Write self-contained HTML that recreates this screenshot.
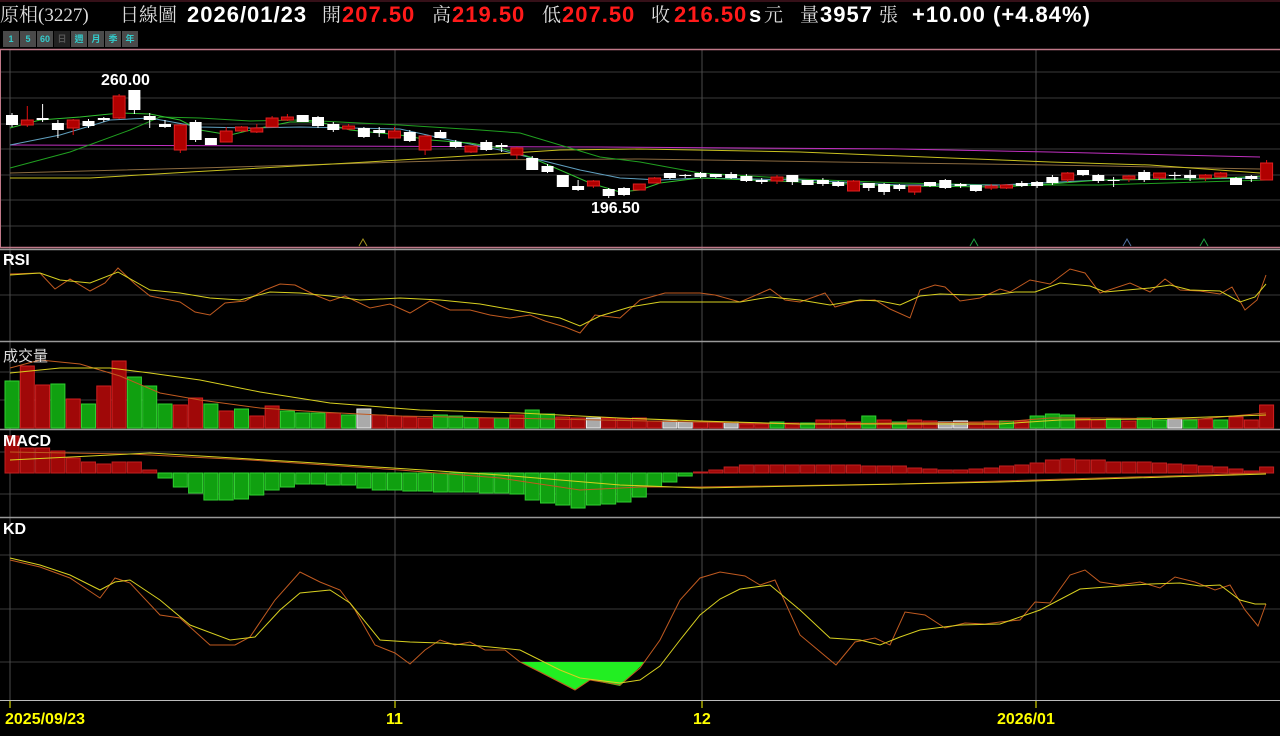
<!DOCTYPE html>
<html><head><meta charset="utf-8">
<style>
html,body{margin:0;padding:0;background:#000;width:1280px;height:736px;overflow:hidden;}
body{position:relative;font-family:"Liberation Sans","Noto Sans CJK TC",sans-serif;}
.t{position:absolute;top:4px;font-size:19px;line-height:24px;white-space:nowrap;}
.c{color:#ddd;font-family:"Liberation Serif","Noto Serif CJK SC",serif;font-size:19px;}
.b{font-weight:bold;font-size:22px;letter-spacing:1px;top:3px;}
.w{color:#fff}.r{color:#ff1a1a}
.btns{position:absolute;left:3px;top:31px;height:16px;display:flex;gap:1px;}
.btns span{width:16px;height:16px;background:#4a4a4a;color:#3cc;font-size:9px;line-height:16px;text-align:center;font-weight:bold;}
.lbl{position:absolute;left:3px;color:#fff;font-weight:bold;font-size:16px;}
svg{position:absolute;left:0;top:0;}
</style></head><body>
<svg id="s" width="1280" height="736" xmlns="http://www.w3.org/2000/svg"></svg>
<div class="t c" style="left:0">原相(3227)</div>
<div class="t c" style="left:120px">日線圖</div>
<div class="t b w" style="left:187px">2026/01/23</div>
<div class="t c" style="left:322px">開</div>
<div class="t b r" style="left:342px">207.50</div>
<div class="t c" style="left:432px">高</div>
<div class="t b r" style="left:452px">219.50</div>
<div class="t c" style="left:542px">低</div>
<div class="t b r" style="left:562px">207.50</div>
<div class="t c" style="left:651px">收</div>
<div class="t b r" style="left:674px">216.50</div>
<div class="t b w" style="left:749px">s</div>
<div class="t c" style="left:764px">元</div>
<div class="t c" style="left:800px">量</div>
<div class="t b w" style="left:820px">3957</div>
<div class="t c" style="left:879px">張</div>
<div class="t b w" style="left:912px">+10.00 (+4.84%)</div>
<div class="btns"><span>1</span><span>5</span><span>60</span><span style="background:#222;color:#555">日</span><span>週</span><span>月</span><span>季</span><span>年</span></div>
<div class="lbl" style="top:252px">RSI</div>
<div class="lbl" style="top:345px;font-weight:normal;color:#ddd;font-family:'Noto Sans CJK TC',sans-serif;font-size:15px">成交量</div>
<div class="lbl" style="top:433px">MACD</div>
<div class="lbl" style="top:521px">KD</div>
<div class="lbl" style="top:72px;left:101px;font-size:16px">260.00</div>
<div class="lbl" style="top:200px;left:591px;font-size:16px">196.50</div>
<div class="lbl" style="top:711px;left:5px;color:#ff0;font-size:16px">2025/09/23</div>
<div class="lbl" style="top:711px;left:386px;color:#ff0;font-size:16px">11</div>
<div class="lbl" style="top:711px;left:693px;color:#ff0;font-size:16px">12</div>
<div class="lbl" style="top:711px;left:997px;color:#ff0;font-size:16px">2026/01</div>
<script>
var s=document.getElementById('s'),h='';
function L(x1,y1,x2,y2,c,w){h+='<line x1="'+x1+'" y1="'+y1+'" x2="'+x2+'" y2="'+y2+'" stroke="'+c+'" stroke-width="'+(w||1)+'"/>';}
function R(x,y,w,hh,f,st){h+='<rect x="'+x+'" y="'+y+'" width="'+w+'" height="'+Math.max(hh,1)+'" fill="'+f+'"'+(st?' stroke="'+st+'" stroke-width="1"':'')+'/>';}
function P(pts,c){h+='<polyline fill="none" stroke="'+c+'" stroke-width="1" points="'+pts.map(function(p){return p.join(',')}).join(' ')+'"/>';}
h+='<line x1="0" y1="1" x2="1280" y2="1" stroke="#6a2030"/>';
[72,98,124,149,175,200,226].forEach(function(y){L(0,y,1280,y,'#3a3a3a');});
[295].forEach(function(y){L(0,y,1280,y,'#3a3a3a');});
[372,400].forEach(function(y){L(0,y,1280,y,'#3a3a3a');});
[452,494].forEach(function(y){L(0,y,1280,y,'#3a3a3a');});
[555,609,662].forEach(function(y){L(0,y,1280,y,'#3a3a3a');});
[10,395,702,1036].forEach(function(x){L(x,50,x,700,'#4a4a4a');L(x,700,x,708,'#ff0');});
L(0,49.5,1280,49.5,'#c07888',1.5);L(0,247.5,1280,247.5,'#c07888',1.5);L(0.5,49,0.5,248,'#c07888');
[249.5,341.5,429.5,517.5].forEach(function(y){L(0,y,1280,y,'#999',1.5);});
L(0,700.5,1280,700.5,'#bbb');
P([[10,145],[600,147],[900,149],[1050,152],[1260,157]],'#c030c0');
P([[10,173],[200,168],[470,160],[640,159],[900,163],[1050,165],[1260,169]],'#8a6a40');
P([[10,178],[90,178],[190,172],[350,163],[450,157],[560,150],[640,149],[800,152],[950,158],[1050,162],[1150,165],[1260,173]],'#c8c020');
P([[10,168],[70,152],[130,130],[160,117],[200,118],[250,121],[300,120],[400,125],[480,130],[520,133],[560,145],[600,157],[640,162],[700,173],[800,179],[900,183],[1000,185],[1100,185],[1200,182],[1266,180]],'#20a020');
P([[10,145],[60,135],[110,120],[150,118],[200,127],[250,128],[300,127],[350,128],[400,129],[450,140],[500,150],[540,160],[580,170],[620,178],[660,180],[700,178],[800,180],[900,185],[1000,185],[1100,180],[1266,178]],'#60a0c0');
P([[10,128],[40,120],[80,117],[120,113],[150,114],[180,120],[200,130],[230,135],[260,128],[290,122],[320,122],[350,130],[400,135],[430,140],[470,143],[500,148],[530,157],[560,170],[590,183],[620,192],[640,190],[660,183],[700,178],[800,182],[900,186],[1000,187],[1050,184],[1100,180],[1200,179],[1266,176]],'#30c030');
var C=[[115,125,113,127,'w'],[120,125,106,127,'r'],[118,120,104,122,'w'],[123,130,120,138,'w'],[120,128,119,135,'r'],[121,126,119,128,'w'],[118,120,117,122,'w'],[96,118,94,119,'r'],[90,110,90,114,'w'],[116,120,113,128,'w'],[124,127,120,128,'w'],[125,150,124,153,'r'],[122,140,120,142,'w'],[138,145,138,145,'w'],[131,142,127,142,'r'],[127,131,126,132,'r'],[128,132,124,133,'r'],[118,127,116,127,'r'],[117,120,114,121,'r'],[115,122,115,122,'w'],[117,126,116,128,'w'],[124,130,122,132,'w'],[126,129,124,130,'r'],[128,137,127,138,'w'],[130,133,127,137,'w'],[131,138,127,138,'r'],[132,141,130,142,'w'],[136,150,135,155,'r'],[132,138,130,138,'w'],[142,147,140,148,'w'],[146,152,146,153,'r'],[142,150,140,151,'w'],[145,147,143,152,'w'],[148,155,147,159,'r'],[158,170,156,170,'w'],[166,172,164,173,'w'],[175,187,175,187,'w'],[186,190,180,191,'w'],[181,186,180,188,'r'],[189,196,188,198,'w'],[188,195,187,196,'w'],[184,190,184,190,'r'],[178,183,177,183,'r'],[173,178,173,179,'w'],[175,176,174,178,'w'],[173,177,172,178,'w'],[174,177,174,178,'w'],[174,178,172,179,'w'],[176,181,174,182,'w'],[180,182,178,184,'w'],[177,181,175,184,'r'],[175,182,175,185,'w'],[180,185,180,185,'w'],[180,184,178,186,'w'],[182,186,181,187,'w'],[181,191,180,191,'r'],[183,188,183,191,'w'],[184,192,183,195,'w'],[185,189,184,191,'w'],[186,192,186,195,'r'],[182,186,182,187,'w'],[180,188,179,189,'w'],[184,186,183,188,'w'],[185,191,185,192,'w'],[186,188,184,190,'r'],[185,188,184,189,'r'],[183,186,181,187,'w'],[182,186,181,188,'w'],[177,183,175,185,'w'],[173,180,172,182,'r'],[170,175,170,176,'w'],[175,181,174,183,'w'],[180,181,177,187,'w'],[176,179,175,182,'r'],[172,180,170,182,'w'],[173,178,173,180,'r'],[175,176,172,180,'w'],[175,178,170,181,'w'],[175,178,174,181,'r'],[173,177,172,178,'r'],[178,185,177,185,'w'],[176,179,175,182,'w'],[163,180,160,180,'r']];
var X=function(i){return 12+i*15.3;};
C.forEach(function(c,i){var x=X(i);var col=c[4]=='r'?'#b00000':'#fff';L(x,c[2],x,c[3],c[4]=='r'?'#e01010':'#fff');R(x-6,c[0],12,c[1]-c[0],col,c[4]=='r'?'#e02020':null);});
[[363,'#a09020'],[974,'#20a040'],[1127,'#5070a0'],[1204,'#20a040']].forEach(function(t){h+='<polyline fill="none" stroke="'+t[1]+'" points="'+(t[0]-4)+',246 '+t[0]+',239 '+(t[0]+4)+',246"/>';});
P([[10,274],[40,273],[55,289],[70,279],[90,291],[105,283],[118,268],[135,284],[150,296],[180,302],[195,312],[210,315],[225,303],[245,301],[265,290],[280,284],[295,285],[315,295],[330,301],[345,296],[370,308],[390,304],[410,313],[430,301],[450,310],[470,310],[490,315],[510,318],[530,315],[545,321],[565,327],[580,333],[595,315],[620,318],[640,300],[665,293],[700,293],[715,295],[740,302],[770,289],[785,300],[800,302],[825,293],[835,307],[855,301],[875,300],[890,309],[910,318],[920,290],[935,285],[945,287],[960,301],[980,298],[1000,289],[1010,292],[1030,280],[1050,284],[1070,269],[1085,273],[1100,293],[1130,283],[1150,292],[1165,279],[1180,290],[1200,291],[1220,294],[1232,287],[1245,310],[1257,300],[1266,275]],'#c05a20');
P([[10,275],[40,273],[60,280],[90,283],[118,272],[150,290],[180,293],[210,298],[240,300],[270,292],[300,293],[330,296],[360,300],[400,298],[440,300],[480,304],[520,311],[560,318],[580,326],[600,316],[630,307],[660,302],[700,302],[740,302],[770,297],[800,300],[830,305],[860,300],[880,301],[900,305],[920,296],[940,294],[970,295],[1000,294],[1015,292],[1035,292],[1060,283],[1090,286],[1105,292],[1150,288],[1170,285],[1190,290],[1220,291],[1240,302],[1255,297],[1266,284]],'#d8d020');
var V=[381,366,385,384,399,404,386,361,377,386,404,405,398,404,411,409,416,406,411,413,413,413,415,409,415,416,417,418,415,416,418,418,418,415,410,414,417,418,418,418,419,418,421,421,422,422,422,422,424,424,422,423,423,420,420,422,416,420,422,420,421,422,421,422,421,421,421,416,414,415,419,420,419,421,418,420,419,420,419,420,417,420,405];
var VC='grrgrgrrgggrrgrgrrgggrgwrrrrgggrgrggrrwrrrrwwrrwrrgrgrrrgrgrrwwrrgrgggrrgrggwgrgrr';
V.forEach(function(t,i){var x=X(i),c=VC[i]||'r';var f=c=='g'?'#10a010':c=='r'?'#a00808':'#aaa',st=c=='g'?'#30d030':c=='r'?'#d02020':'#eee';R(x-7,t,14,428-t,f,st);});
P([[10,368],[40,360],[80,364],[120,376],[160,393],[200,400],[260,408],[320,412],[400,416],[500,418],[600,420],[700,422],[800,424],[900,423],[1000,422],[1050,418],[1100,418],[1200,419],[1266,413]],'#c05a20');
P([[10,373],[60,368],[110,368],[150,373],[200,380],[260,392],[330,403],[420,410],[520,413],[620,418],[700,421],[800,424],[900,424],[1000,424],[1060,420],[1150,419],[1266,415]],'#d8d020');
var M=[436,448,448,451,458,462,464,462,462,470,478,487,493,500,500,499,495,490,487,484,484,485,485,488,490,490,491,491,492,492,492,493,493,494,500,503,505,508,505,504,502,497,487,482,476,472,470,467,465,465,465,465,465,465,465,465,466,466,466,468,469,470,470,469,468,466,465,463,460,459,460,460,462,462,462,463,464,465,466,467,469,471,467];
M.forEach(function(v,i){var x=X(i);if(v<473){R(x-7,v,14,473-v,'#a00808','#c02020');}else{R(x-7,473,14,v-473,'#10a010','#30d030');}});
P([[10,452],[130,454],[250,460],[400,470],[500,478],[580,490],[640,487],[700,487],[900,484],[1100,478],[1266,473]],'#c05a20');
P([[10,460],[150,453],[300,462],[500,475],[620,485],[700,488],[1000,482],[1266,474]],'#d8d020');
h+='<polygon fill="#22ee22" points="520,662 540,672 560,682 575,690 590,680 620,686 645,662"/>';
P([[10,560],[40,567],[70,578],[100,598],[115,578],[130,583],[160,615],[180,618],[210,645],[235,645],[250,637],[275,600],[300,572],[320,582],[340,590],[355,610],[375,645],[395,653],[410,664],[425,650],[440,640],[455,645],[470,642],[485,650],[505,650],[520,662],[540,672],[575,690],[590,680],[620,685],[640,668],[660,640],[680,600],[700,578],[720,572],[745,576],[760,585],[775,580],[800,635],[836,665],[855,642],[875,638],[890,645],[905,612],[925,615],[945,628],[965,623],[985,624],[1000,622],[1020,620],[1035,602],[1050,603],[1070,575],[1085,570],[1100,582],[1120,585],[1140,582],[1160,588],[1175,577],[1195,582],[1215,590],[1230,585],[1245,610],[1258,626],[1266,604]],'#c05a20');
P([[10,558],[40,565],[70,575],[100,590],[115,582],[130,580],[160,600],[190,625],[230,640],[255,637],[280,610],[300,593],[330,590],[350,603],[380,640],[410,642],[440,643],[480,646],[520,650],[560,670],[580,678],[620,683],[640,680],[660,666],[680,640],[700,615],[720,599],[740,589],[770,585],[800,610],[830,638],[860,640],[880,645],[900,637],[920,630],[960,625],[1000,624],[1040,610],[1080,589],[1120,586],[1150,584],[1180,583],[1200,586],[1220,585],[1240,600],[1255,604],[1266,604]],'#d8d020');
s.innerHTML=h;
</script>
</body></html>
